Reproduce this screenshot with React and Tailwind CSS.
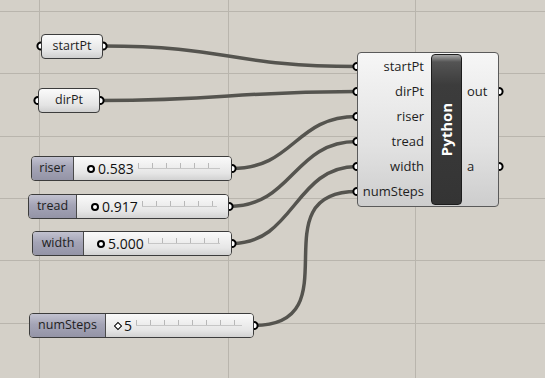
const GRID_X = [39, 228, 415]
const GRID_Y = [11, 73, 136, 198, 260, 323]

const PY_ROWS = [66.5, 91.5, 116.5, 141.5, 166.5, 191.5]

// output port -> python input port
const WIRES = [
  [103, 46, 357, PY_ROWS[0]],
  [100, 100.5, 357, PY_ROWS[1]],
  [232, 168.5, 357, PY_ROWS[2]],
  [229, 206.5, 357, PY_ROWS[3]],
  [232, 243.5, 357, PY_ROWS[4]],
  [254, 325.5, 357, PY_ROWS[5]],
]

const PORTS = [
  [41, 46], [103, 46],
  [38, 100.5], [100, 100.5],
  [232, 168.5], [229, 206.5], [232, 243.5], [254, 325.5],
  ...PY_ROWS.map(y => [357, y]),
  [499, PY_ROWS[1]], [499, PY_ROWS[4]],
]

const SLIDERS = [
  { name: 'riser', value: '0.583', pos: 'left-[31px] top-[156px] w-[201px]', label: 'w-[42px]', pad: 'pl-[13px]' },
  { name: 'tread', value: '0.917', pos: 'left-[28px] top-[194px] w-[201px]', label: 'w-[48px]', pad: 'pl-[14px]' },
  { name: 'width', value: '5.000', pos: 'left-[32px] top-[231px] w-[200px]', label: 'w-[51px]', pad: 'pl-[13px]' },
  { name: 'numSteps', value: '5', pos: 'left-[29px] top-[313px] w-[225px]', label: 'w-[76px]', pad: 'pl-[9px]', diamond: true },
]

function wirePath([x1, y1, x2, y2]) {
  const d = Math.max(Math.abs(x2 - x1) * 0.5, Math.abs(y2 - y1) * 0.75)
  return `M${x1} ${y1} C${x1 + d} ${y1} ${x2 - d} ${y2} ${x2} ${y2}`
}

function Param({ name, pos }) {
  return (
    <div className={`absolute ${pos} h-[25px] rounded-[4px] border border-[#3c3c3c] bg-[linear-gradient(to_bottom,#fbfbfb,#e4e4e4_70%,#cfcfcf)] flex items-center justify-center text-[12.5px] text-[#1e1e1e]`}>
      {name}
    </div>
  )
}

function Slider({ name, value, pos, label, pad, diamond }) {
  return (
    <div className={`absolute ${pos} h-[25px] rounded-[4px] border border-[#3c3c3c] overflow-hidden flex`}>
      <div className={`${label} shrink-0 border-r border-[#4a4a4a] bg-[linear-gradient(to_bottom,#c2c2d0,#a4a4b6_45%,#9494a6)] flex items-center justify-center text-[12.5px] text-[#1e1e1e]`}>
        {name}
      </div>
      <div className={`flex-1 flex items-center ${pad} pr-[11px] bg-[linear-gradient(to_bottom,#fafafa,#e6e6e6_70%,#d2d2d2)]`}>
        {diamond ? (
          <span className="w-[6px] h-[6px] rotate-45 border-[1.5px] border-black bg-white shrink-0" />
        ) : (
          <span className="w-[8px] h-[8px] rounded-full border-2 border-black bg-white shrink-0" />
        )}
        <span className="ml-[3px] text-[14px] leading-none text-[#111]">{value}</span>
        <div className="flex-1 ml-[4px] mb-[5px] h-[6px] border-b border-[#c6c6c6] bg-[repeating-linear-gradient(to_right,#b8b8b8_0_1px,transparent_1px_14px)]" />
      </div>
    </div>
  )
}

function Python() {
  const inputs = ['startPt', 'dirPt', 'riser', 'tread', 'width', 'numSteps']
  const outputs = ['', 'out', '', '', 'a', '']
  return (
    <div className="absolute left-[357px] top-[52px] w-[142px] h-[155px] rounded-[4px] border border-[#5a5a5a] bg-[linear-gradient(to_bottom,#f6f6f6,#e2e2e2_60%,#cdcdcd)] flex text-[13px] text-[#1e1e1e]">
      <div className="w-[70px] pt-[1px] pr-[4px] flex flex-col">
        {inputs.map(n => (
          <div key={n} className="h-[25px] flex items-center justify-end">{n}</div>
        ))}
      </div>
      <div className="ml-[3px] my-[1px] w-[31px] rounded-[4px] border border-[#1c1c1c] bg-[linear-gradient(to_bottom,#a8a8a8_0px,#545454_7px,#3c3c3c_30px,#343434)] flex items-center justify-center">
        <span className="-rotate-90 text-white font-bold text-[15px] leading-none">Python</span>
      </div>
      <div className="pt-[1px] pl-[5px] flex flex-col">
        {outputs.map((n, i) => (
          <div key={i} className="h-[25px] flex items-center">{n}</div>
        ))}
      </div>
    </div>
  )
}

export default function App() {
  return (
    <div className="relative w-[545px] h-[378px] overflow-hidden bg-[#d4d0c8] font-['Open_Sans','Noto_Sans',sans-serif]">
      <svg className="absolute inset-0" width="545" height="378">
        {GRID_X.map(x => (
          <line key={'x' + x} x1={x + 0.5} y1="0" x2={x + 0.5} y2="378" stroke="#b9b5ad" strokeWidth="1" />
        ))}
        {GRID_Y.map(y => (
          <line key={'y' + y} x1="0" y1={y + 0.5} x2="545" y2={y + 0.5} stroke="#b9b5ad" strokeWidth="1" />
        ))}
        {WIRES.map((w, i) => (
          <path key={i} d={wirePath(w)} fill="none" stroke="#55544f" strokeWidth="3.5" />
        ))}
        {PORTS.map(([x, y], i) => (
          <circle key={i} cx={x} cy={y} r="3.6" fill="#fff" stroke="#000" strokeWidth="2" />
        ))}
      </svg>

      <Param name="startPt" pos="left-[41px] top-[34px] w-[62px]" />
      <Param name="dirPt" pos="left-[38px] top-[88px] w-[62px]" />

      {SLIDERS.map(s => (
        <Slider key={s.name} {...s} />
      ))}

      <Python />
    </div>
  )
}
